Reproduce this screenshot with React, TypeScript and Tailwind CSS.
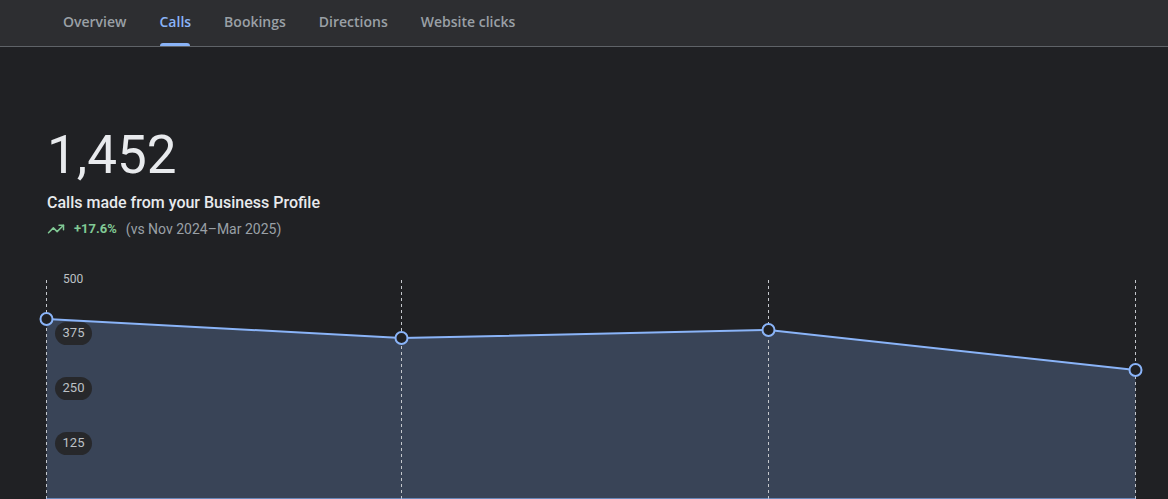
import React from "react";
import { TrendingUp } from "lucide-react";

const tabs = ["Overview", "Calls", "Bookings", "Directions", "Website clicks"];

function Chart() {
  const top = 270;
  const pts: [number, number][] = [
    [46.5, 319 - top],
    [401.5, 338 - top],
    [768.5, 330 - top],
    [1135.5, 370 - top],
  ];
  const line = `M${pts.map(([x, y]) => `${x},${y}`).join(" L")}`;
  const area = `${line} L1135.5,229 L46.5,229 Z`;
  const labels = [
    { v: "375", y: 333 - top },
    { v: "250", y: 388 - top },
    { v: "125", y: 443 - top },
  ];
  return (
    <div className="relative h-[229px] w-full">
      <svg width="1168" height="229" viewBox="0 0 1168 229" className="block">
        <path d={area} fill="#394457" />
        {pts.map(([x], i) => (
          <line key={i} x1={x} x2={x} y1={10} y2={229} stroke="#c4c7cc" strokeWidth="1" strokeDasharray="3 3" />
        ))}
        <line x1="46" x2="1136" y1="228.5" y2="228.5" stroke="#8ab4f8" strokeOpacity="0.6" strokeWidth="1" />
        <path d={line} fill="none" stroke="#8ab4f8" strokeWidth="2" strokeLinejoin="round" />
        {pts.map(([x, y], i) => (
          <circle key={i} cx={x} cy={y} r="6" fill="#202124" stroke="#8ab4f8" strokeWidth="2" />
        ))}
      </svg>
      <span className="absolute left-[63px] top-[2px] text-[12px] leading-[14px] text-[#bdc1c6]">500</span>
      {labels.map((l) => (
        <span
          key={l.v}
          className="absolute left-[55px] flex h-[23px] w-[37px] items-center justify-center rounded-full bg-[#27282b] text-[13px] text-[#bdc1c6]"
          style={{ top: l.y - 11.5 }}
        >
          {l.v}
        </span>
      ))}
    </div>
  );
}

export default function App() {
  return (
    <div className="h-[499px] w-[1168px] overflow-hidden bg-[#202124]" style={{ fontFamily: "Roboto, 'Noto Sans', sans-serif" }}>
      <div
        className="flex h-[47px] items-stretch gap-[33px] border-b border-[#5f6368] bg-[#2d2e31] pl-[63px]"
        style={{ fontFamily: "'Open Sans', Roboto, sans-serif" }}
      >
        {tabs.map((t) => {
          const active = t === "Calls";
          return (
            <div key={t} className="relative flex items-center pb-[3px]">
              <span className={`text-[14px] font-semibold ${active ? "text-[#8ab4f8]" : "text-[#9aa0a6]"}`}>{t}</span>
              {active && <div className="absolute bottom-0 left-[1px] right-[1px] h-[3px] rounded-t-[3px] bg-[#8ab4f8]" />}
            </div>
          );
        })}
      </div>
      <div className="pl-[47px] pt-[78px]">
        <div className="text-[53px] leading-[60px] text-[#e8eaed]">1,452</div>
        <div className="mt-[8px] text-[16px] font-medium leading-[20px] text-[#e8eaed]">Calls made from your Business Profile</div>
        <div className="mt-[6px] flex items-center gap-[9px] text-[14px] leading-[20px]">
          <TrendingUp size={18} strokeWidth={2} className="text-[#81c995]" />
          <span className="font-bold text-[13px] text-[#81c995]">+17.6%</span>
          <span className="text-[#9aa0a6]">(vs Nov 2024–Mar 2025)</span>
        </div>
      </div>
      <div className="mt-[31px]">
        <Chart />
      </div>
    </div>
  );
}
